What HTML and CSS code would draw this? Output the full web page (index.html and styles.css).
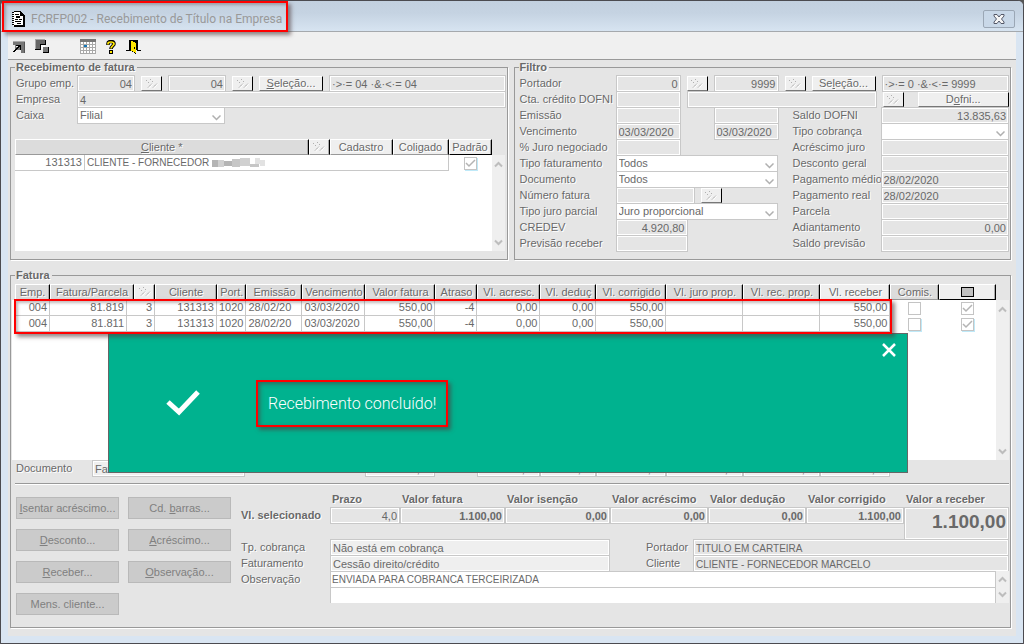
FILE: index.html
```html
<!DOCTYPE html>
<html lang="pt-BR">
<head>
<meta charset="utf-8">
<title>FCRFP002 - Recebimento de Título na Empresa</title>
<link rel="stylesheet" href="styles.css">
</head>
<body>
<svg class="defs" aria-hidden="true">
  <symbol id="pick" viewBox="0 0 14 10">
    <path d="M4 9.5l4-5M9 9.5l4-5" stroke="#fff"/>
    <path d="M3 8.500l4-4M8 8.500l4-4" stroke="#a8a8a8" stroke-dasharray="1.500 .5"/>
    <path d="M1 1h1v1h-1zM3 3h1v1h-1zM5 0h1v1h-1zM7 2h1v1h-1z" fill="#b0b0b0"/>
  </symbol>
  <symbol id="up" viewBox="0 0 9 7"><path d="M1 5.500L4.500 2L8 5.500" fill="none" stroke="#bdbdbd" stroke-width="2"/></symbol>
  <symbol id="down" viewBox="0 0 9 7"><path d="M1 1.500L4.500 5L8 1.500" fill="none" stroke="#bdbdbd" stroke-width="2"/></symbol>
</svg>
<div class="window">
  <header class="titlebar">
    <svg class="doc-icon" width="13" height="16" viewBox="0 0 13 16" shape-rendering="crispEdges"><path d="M1 1h8l3 3v11H1z" fill="#fff"/><path d="M0 1h2v1H0zM0 3h2v1H0zM0 5h2v1H0zM0 7h2v1H0zM0 9h2v1H0zM0 11h2v1H0zM0 13h2v1H0zM2 0h7v1H2zM9 1h1v1h1v1h1v1h1v11h-2V5H8V1zM2 14h11v2H2zM3 3h4v1H3zM4 5h4v2H4zM3 8h3v1H3zM7 8h3v1H7zM3 10h6v1H3zM5 12h4v1H5z" fill="#000"/></svg>
    <h1>FCRFP002 - Recebimento de Título na Empresa</h1>
    <button class="close" aria-label="Fechar"><svg width="12" height="10" viewBox="0 0 12 10"><path d="M1 .5h3l2 2.500 2-2.500h3v1.500L8.500 5 11 8v1.500H8L6 7 4 9.500H1V8l2.500-3L1 2z" fill="#f5f5f5" stroke="#545868"/></svg></button>
    <div class="mark mark-title"></div>
  </header>

  <nav class="toolbar">
    <button aria-label="Abrir"><svg width="12" height="12" viewBox="0 0 12 12" shape-rendering="crispEdges"><path d="M0 1h11v11H8V4H0z" fill="#777"/><path d="M2 3h7v6H2z" fill="#777"/><path d="M0 0h12v1H0z" fill="#aaa"/><path d="M11 1h1v11h-1z" fill="#555"/><path d="M3 4h5v5H7V6H6v1H5v1H4v1H3v1H2v1H0v-1h1V9h1V8h1V7h1V6h1V5H3z" fill="#000"/><path d="M3 5h2v1H3z" fill="#eee"/></svg></button>
    <button aria-label="Organizar"><svg width="15" height="15" viewBox="0 0 15 15" shape-rendering="crispEdges"><path d="M0 0h10v5H5v5H0z" fill="#666"/><path d="M0 0h10v1H0zM0 0h1v10H0z" fill="#aaa"/><path d="M6 6h4v2H8v2H6z" fill="#fff"/><path d="M8 8h6v6H8z" fill="#777"/><path d="M10 1h1v5h-1zM5 5h1v5H5zM0 10h6v1H0zM5 5h6v1H5zM13 8h1v6H8v-1h5z" fill="#000"/></svg></button>
    <button class="spaced" aria-label="Calendário"><svg width="16" height="15" viewBox="0 0 16 15" shape-rendering="crispEdges"><path d="M0 0h16v15H0z" fill="#a9a9a9"/><path d="M0 0h16v3H0z" fill="#777"/><path d="M1 3h2v2H1zM4 3h2v2H4zM7 3h2v2H7zM10 3h2v2h-2zM13 3h2v2h-2zM1 6h2v2H1zM7 6h2v2H7zM10 6h2v2h-2zM13 6h2v2h-2zM1 9h2v2H1zM4 9h2v2H4zM7 9h2v2H7zM10 9h2v2h-2zM13 9h2v2h-2zM1 12h2v2H1zM4 12h2v2H4zM7 12h2v2H7zM10 12h2v2h-2zM13 12h2v2h-2z" fill="#fff"/><path d="M4 6h3v2H4z" fill="#1677b8"/></svg></button>
    <button aria-label="Ajuda"><svg width="10" height="14" viewBox="0 0 10 14"><path d="M2 5V3.500C2 2 3 1.500 5 1.500S8 2.500 8 4 5 6.500 5 9" fill="none" stroke="#000" stroke-width="3.500"/><path d="M2 4.500V3.500C2 2.500 3 2 5 2S8 3 8 4 5 6.500 5 8.500" fill="none" stroke="#ffe600" stroke-width="1.700"/><path d="M3 10h4v4H3z" fill="#000"/><path d="M4 11h2v2H4z" fill="#ffe600"/></svg></button>
    <button aria-label="Sair"><svg width="15" height="14" viewBox="0 0 15 14" shape-rendering="crispEdges"><path d="M3 0h9v10h3v1h-4V1H4v10H0v-1h3z" fill="#000"/><path d="M4 1h7v9H10v4H9v-1H8v-1H6v-1H4z" fill="#000"/><path d="M5 1h2v1h2v1h1v10H9v-1H7v-1H5z" fill="#ffe600"/><path d="M8 7h1v2H8z" fill="#000"/></svg></button>
  </nav>

  <main>
    <div class="top">
      <fieldset class="group">
        <legend>Recebimento de fatura</legend>
        <div class="line narrow">
          <label for="grupo1">Grupo emp.</label>
          <input id="grupo1" class="num w58" value="04" readonly>
          <button class="btn pick" aria-label="Buscar grupo inicial"><svg><use href="#pick"/></svg></button>
          <input class="num w58" value="04" aria-label="Grupo final" readonly>
          <button class="btn pick" aria-label="Buscar grupo final"><svg><use href="#pick"/></svg></button>
          <button class="btn select-btn"><u>S</u>eleção...</button>
          <input class="grow" value="·&gt;·= 04 ·&amp;·&lt;·= 04" aria-label="Condição do grupo" readonly>
        </div>
        <div class="line narrow">
          <label for="empresa">Empresa</label>
          <input id="empresa" class="grow" value="4" readonly>
        </div>
        <div class="line narrow">
          <label for="caixa">Caixa</label>
          <select id="caixa" class="w148"><option>Filial</option></select>
        </div>
        <div class="list clients">
          <table>
            <colgroup><col class="c70"><col><col class="c21"><col class="c63"><col class="c56"><col class="c43"></colgroup>
            <thead><tr>
              <th colspan="2"><button class="gray"><u>C</u>liente *</button></th>
              <th><button aria-label="Buscar cliente"><svg><use href="#pick"/></svg></button></th>
              <th><button>Cadastro</button></th>
              <th><button>Coli<u>g</u>ado</button></th>
              <th><button class="last">Padrão</button></th>
            </tr></thead>
            <tbody><tr>
              <td class="r">131313</td>
              <td colspan="4" class="caps">CLIENTE - FORNECEDOR <svg class="masked" width="53" height="11" viewBox="0 0 53 11"><path d="M0 2h6v7H0zM12 3h8v5h-8z" fill="#b4b4b4"/><path d="M6 2h6v7H6zM28 0h10v8H28z" fill="#d0d0d0"/><path d="M20 1h8v8h-8zM38 6h9v3h-9z" fill="#c6c6c6"/><path d="M43 0h5v6h-5zM48 2h5v6h-5z" fill="#e2e2e2"/></svg></td>
              <td class="check"><input type="checkbox" class="lit" checked aria-label="Padrão"></td>
            </tr></tbody>
          </table>
          <div class="scroll"><svg><use href="#up"/></svg><svg><use href="#down"/></svg></div>
        </div>
      </fieldset>

      <fieldset class="group">
        <legend>Filtro</legend>
        <div class="line">
          <label for="portador1">Portador</label>
          <input id="portador1" class="num w65" value="0" readonly>
          <button class="btn pick" aria-label="Buscar portador inicial"><svg><use href="#pick"/></svg></button>
          <input class="num w65" value="9999" aria-label="Portador final" readonly>
          <button class="btn pick" aria-label="Buscar portador final"><svg><use href="#pick"/></svg></button>
          <button class="btn select-btn">Se<u>l</u>eção...</button>
          <input class="grow" value="·&gt;·= 0 ·&amp;·&lt;·= 9999" aria-label="Condição do portador" readonly>
        </div>
        <div class="line">
          <label for="cta">Cta. crédito DOFNI</label>
          <input id="cta" class="w65" readonly>
          <input class="w190" aria-label="Descrição da conta" readonly>
          <button class="btn pick" aria-label="Buscar conta"><svg><use href="#pick"/></svg></button>
          <button class="btn grow dofni">D<u>o</u>fni...</button>
        </div>
        <div class="line">
          <div class="half"><label for="emissao">Emissão</label><input id="emissao" class="w65" readonly><input class="w65 until" aria-label="Emissão final" readonly></div>
          <label class="second" for="saldo">Saldo DOFNI</label><input id="saldo" class="grow num" value="13.835,63" readonly>
        </div>
        <div class="line">
          <div class="half"><label for="venc">Vencimento</label><input id="venc" class="w65" value="03/03/2020" readonly><input class="w65 until" value="03/03/2020" aria-label="Vencimento final" readonly></div>
          <label class="second" for="tipocob">Tipo cobrança</label><select id="tipocob" class="grow"><option></option></select>
        </div>
        <div class="line">
          <div class="half"><label for="juro">% Juro negociado</label><input id="juro" class="w65" readonly></div>
          <label class="second" for="acr">Acréscimo juro</label><input id="acr" class="grow" readonly>
        </div>
        <div class="line">
          <div class="half"><label for="tipofat">Tipo faturamento</label><select id="tipofat" class="w162"><option>Todos</option></select></div>
          <label class="second" for="desc">Desconto geral</label><input id="desc" class="grow" readonly>
        </div>
        <div class="line">
          <div class="half"><label for="doc">Documento</label><select id="doc" class="w162"><option>Todos</option></select></div>
          <label class="second" for="pagm">Pagamento médio</label><input id="pagm" class="grow" value="28/02/2020" readonly>
        </div>
        <div class="line">
          <div class="half"><label for="numfat">Número fatura</label><input id="numfat" class="w79" readonly><button class="btn pick after" aria-label="Buscar fatura"><svg><use href="#pick"/></svg></button></div>
          <label class="second" for="pagr">Pagamento real</label><input id="pagr" class="grow" value="28/02/2020" readonly>
        </div>
        <div class="line">
          <div class="half"><label for="tipojuro">Tipo juro parcial</label><select id="tipojuro" class="w162"><option>Juro proporcional</option></select></div>
          <label class="second" for="parc">Parcela</label><input id="parc" class="grow" readonly>
        </div>
        <div class="line">
          <div class="half"><label for="credev">CREDEV</label><input id="credev" class="w72 num" value="4.920,80" readonly></div>
          <label class="second" for="adi">Adiantamento</label><input id="adi" class="grow num" value="0,00" readonly>
        </div>
        <div class="line">
          <div class="half"><label for="prev">Previsão receber</label><input id="prev" class="w72" readonly></div>
          <label class="second" for="saldop">Saldo previsão</label><input id="saldop" class="grow" readonly>
        </div>
      </fieldset>
    </div>

    <fieldset class="group invoice">
      <legend>Fatura</legend>
      <div class="list invoices">
        <table>
          <colgroup><col class="c35"><col class="c77"><col class="c7"><col class="c21"><col class="c62"><col class="c28"><col class="c56"><col class="c63"><col class="c70"><col class="c42"><col class="c63"><col class="c56"><col class="c70"><col class="c77"><col class="c77"><col class="c70"><col class="c49"><col></colgroup>
          <thead><tr>
            <th><button class="gray">Emp.</button></th>
            <th colspan="2"><button class="gray">Fatura/Parcela</button></th>
            <th><button aria-label="Buscar fatura"><svg><use href="#pick"/></svg></button></th>
            <th><button class="gray">Cliente</button></th>
            <th><button class="gray">Port.</button></th>
            <th><button class="gray">Emissão</button></th>
            <th><button class="gray">Vencimento</button></th>
            <th><button class="gray">Valor fatura</button></th>
            <th><button class="gray">Atraso</button></th>
            <th><button class="gray">Vl. acresc.</button></th>
            <th><button class="gray">Vl. deduç</button></th>
            <th><button class="gray">Vl. corrigido</button></th>
            <th><button class="gray">Vl. juro prop.</button></th>
            <th><button class="gray">Vl. rec. prop.</button></th>
            <th><button>Vl. receber</button></th>
            <th><button class="gray">Comis.</button></th>
            <th><button class="last" aria-label="Marcar todas"><span class="square"></span></button></th>
          </tr></thead>
          <tbody>
            <tr><td class="r">004</td><td class="r">81.819</td><td class="r" colspan="2">3</td><td class="r">131313</td><td class="r">1020</td><td>28/02/20</td><td>03/03/2020</td><td class="r">550,00</td><td class="r">-4</td><td class="r">0,00</td><td class="r">0,00</td><td class="r">550,00</td><td></td><td></td><td class="r">550,00</td><td class="check"><input type="checkbox" aria-label="Comissão 81.819"></td><td class="check"><input type="checkbox" checked aria-label="Selecionar 81.819"></td></tr>
            <tr><td class="r">004</td><td class="r">81.811</td><td class="r" colspan="2">3</td><td class="r">131313</td><td class="r">1020</td><td>28/02/20</td><td>03/03/2020</td><td class="r">550,00</td><td class="r">-4</td><td class="r">0,00</td><td class="r">0,00</td><td class="r">550,00</td><td></td><td></td><td class="r">550,00</td><td class="check"><input type="checkbox" class="lit" aria-label="Comissão 81.811"></td><td class="check"><input type="checkbox" class="lit" checked aria-label="Selecionar 81.811"></td></tr>
          </tbody>
        </table>
        <div class="scroll"><svg><use href="#up"/></svg><svg><use href="#down"/></svg></div>
      </div>
      <div class="totals">
        <label for="docrow">Documento</label>
        <input id="docrow" class="doc light" value="Fatura" readonly>
        <input class="num light t1" value="1.100,00" aria-label="Total valor fatura" readonly>
        <input class="num light t2" value="0,00" aria-label="Total acréscimo" readonly>
        <input class="num light t3" value="0,00" aria-label="Total dedução" readonly>
        <input class="num light t4" value="1.100,00" aria-label="Total corrigido" readonly>
        <input class="num light t5" value="0,00" aria-label="Total juro proporcional" readonly>
        <input class="num light t6" value="0,00" aria-label="Total recebido proporcional" readonly>
        <input class="num light t7" value="1.100,00" aria-label="Total a receber" readonly>
      </div>
      <hr>
      <div class="bottom">
        <div class="actions">
          <button><u>I</u>sentar acréscimo...</button><button>Cd. <u>b</u>arras...</button>
          <button><u>D</u>esconto...</button><button><u>A</u>créscimo...</button>
          <button><u>R</u>eceber...</button><button><u>O</u>bservação...</button>
          <button>Mens. cliente...</button>
        </div>
        <div class="detail">
          <div class="sums">
            <strong class="sel">Vl. selecionado</strong>
            <div><label for="s1">Prazo</label><input id="s1" value="4,0" class="num" readonly></div>
            <div><label for="s2">Valor fatura</label><input id="s2" value="1.100,00" class="num bold" readonly></div>
            <div><label for="s3">Valor isenção</label><input id="s3" value="0,00" class="num bold" readonly></div>
            <div><label for="s4">Valor acréscimo</label><input id="s4" value="0,00" class="num bold" readonly></div>
            <div><label for="s5">Valor dedução</label><input id="s5" value="0,00" class="num bold" readonly></div>
            <div><label for="s6">Valor corrigido</label><input id="s6" value="1.100,00" class="num bold" readonly></div>
            <div><label for="s7">Valor a receber</label><input id="s7" value="1.100,00" class="num big" readonly></div>
          </div>
          <div class="info">
            <label for="tp">Tp. cobrança</label><input id="tp" class="light" value="Não está em cobrança" readonly>
            <label class="indent" for="port">Portador</label><input id="port" class="caps" value="TITULO EM CARTEIRA" readonly>
            <label for="fat">Faturamento</label><input id="fat" class="light" value="Cessão direito/crédito" readonly>
            <label class="indent" for="cli">Cliente</label><input id="cli" class="caps" value="CLIENTE - FORNECEDOR MARCELO" readonly>
          </div>
          <div class="note">
            <label for="obs">Observação</label>
            <textarea id="obs" class="caps" readonly>ENVIADA PARA COBRANCA TERCEIRIZADA</textarea>
            <div class="scroll"><svg><use href="#up"/></svg><svg><use href="#down"/></svg></div>
          </div>
        </div>
      </div>

      <div class="toast" role="status">
        <svg class="tick" width="34" height="26" viewBox="0 0 34 26"><path d="M2 12l11 10L32 2" fill="none" stroke="#fff" stroke-width="5"/></svg>
        <p>Recebimento concluído!</p>
        <button aria-label="Fechar mensagem"><svg width="14" height="14" viewBox="0 0 14 14"><path d="M1 1l12 12M13 1L1 13" stroke="#fff" stroke-width="2.500"/></svg></button>
      </div>
      <div class="mark mark-rows"></div>
    </fieldset>
  </main>
</div>
</body>
</html>
```
FILE: styles.css
```css
* { box-sizing: border-box; }
body { margin: 0; background: #555; color: #696969; font: 11px/16px "Liberation Sans", Arial, sans-serif; }
button, input, select, textarea { font: inherit; color: inherit; margin: 0; border-radius: 0; outline: none; }
button { padding: 0; text-align: center; white-space: nowrap; }
.defs { position: absolute; width: 0; height: 0; }

.window {
  min-height: 100vh; display: flex; flex-direction: column; padding: 0 7px 7px;
  border: 1px solid #4b4b50; border-radius: 6px 6px 0 0; background: #d9e5f2;
}
.titlebar {
  position: relative; display: flex; align-items: center; height: 31px; margin: 0 -7px; padding: 6px 8px 0 11px;
  background: linear-gradient(#c2d0df, #c5d3e2 40%, #d7e4f1); border-radius: 5px 5px 0 0; border-bottom: 1px solid #a5a9ad;
}
.titlebar h1 { flex: 1; margin: 0 0 0 6px; font: 12px/16px Roboto, sans-serif; color: #999; }
.close { display: flex; align-items: center; justify-content: center; width: 32px; height: 18px; background: #c9d8e8; border: 1px solid #9ba7b5; border-radius: 2px; }

.mark { position: absolute; border: 2px solid #f00; box-shadow: 3px 3px 4px rgba(80, 60, 60, .6), inset 2px 2px 3px rgba(80, 60, 60, .35); pointer-events: none; }
.mark-title { left: 1px; top: 0; width: 286px; height: 31px; }

.toolbar { display: flex; align-items: center; gap: 10px; height: 28px; padding: 2px 0 0 5px; background: #f0f0f0; border-bottom: 1px solid #999; }
.toolbar button { display: flex; padding: 0; border: 0; background: none; }
.toolbar .spaced { margin-left: 20px; }

main { flex: 1; display: flex; flex-direction: column; gap: 9px; padding: 1px 5px 8px 2px; background: #e5e5e5; }
.top { display: flex; gap: 6px; }
.top > .group { flex: 1; }
.group { position: relative; min-width: 0; margin: 0; padding: 1px 1px 8px 4px; border: 1px solid #999; box-shadow: 1px 1px 0 #fff; }
legend { margin: 0; padding: 0 2px 0 1px; font-weight: bold; line-height: 13px; background: #e5e5e5; text-shadow: 1px 1px 0 #fff; }
label, .sel { flex: none; padding-left: 1px; text-shadow: 1px 1px 0 #fff; white-space: nowrap; }

.line { display: flex; gap: 6px; height: 16px; align-items: flex-start; }
.line label { width: 91px; }
.line.narrow label { width: 56px; }
.line .half { display: flex; flex: none; width: 267px; }
.line .half label { width: 97px; }
.line .second { width: 83px; }
.line .until { margin-left: 33px; }
.line .after { margin-left: 6px; }

input:not([type]) { flex: none; min-width: 0; height: 17px; padding: 1px 2px 0; border: 1px solid #c8c8c8; background: #e5e5e5; box-shadow: inset 0 0 0 1px #fff; line-height: 14px; }
input.light:not([type]) { background: #efefef; }
input.num { text-align: right; }
select {
  flex: none; height: 17px; padding: 0 2px 1px; border: 1px solid #c8c8c8; appearance: none; line-height: 14px;
  background: #fff url("data:image/svg+xml,%3Csvg xmlns='http://www.w3.org/2000/svg' width='9' height='6'%3E%3Cpath d='M.5 .5L4.500 4.500L8.500 .5' fill='none' stroke='%23b0b0b0' stroke-width='1.500'/%3E%3C/svg%3E") no-repeat right 3px top 7px;
}
input.grow:not([type]), select.grow, .btn.grow { flex: 1; min-width: 0; }
.w58 { width: 58px; }
.w65 { width: 65px; }
.w72 { width: 72px; }
.w79 { width: 79px; }
.w148 { width: 148px; }
.w162 { width: 162px; }
.w190 { width: 190px; }
.caps, input.caps { font-size: 10px; }

.btn { flex: none; height: 15px; margin-top: 1px; border: 1px solid #fff; border-right-color: #000; border-bottom-color: #777; background: #efefef; line-height: 13px; text-shadow: 1px 1px 0 #fff; }
.pick { width: 21px; }
.btn svg, th svg { display: block; width: 14px; height: 10px; margin: 0 auto; }
.select-btn { width: 64px; }
.btn.dofni { margin-left: 8px; }

.list { display: flex; align-items: stretch; }
.clients { height: 112px; margin-top: 16px; margin-right: 1px; background: linear-gradient(#e5e5e5 16px, #fff 16px); }
.invoices { height: 176px; margin: 1px 0 0 -3px; padding-left: 3px; background: linear-gradient(#e5e5e5 16px, #fff 16px); }
table { flex: 1; min-width: 0; height: max-content; border-collapse: separate; border-spacing: 0; table-layout: fixed; }
th, td { padding: 0; font-weight: normal; }
th { height: 16px; }
th button { display: block; width: 100%; height: 16px; border: 1px solid #fff; border-right-color: #000; border-bottom-color: #999; background: #efefef; line-height: 14px; overflow: hidden; text-shadow: 1px 1px 0 #fff; box-shadow: inset -1px 0 0 #aaa; }
th button.gray { background: #dcdcdc; }
th button.last { border-bottom-color: #000; }
td { height: 16px; padding: 0 2px; border-right: 1px solid #c8c8c8; border-bottom: 1px solid #c8c8c8; line-height: 15px; white-space: nowrap; overflow: hidden; }
.r { text-align: right; }
td.check { border: 0; padding: 0; text-align: center; }
td.check input { display: block; appearance: none; width: 13px; height: 13px; margin: 0 auto; border: 1px solid #c4c4c4; background: #fff center no-repeat; }
td.check .lit { box-shadow: 1px 1px 0 #bfe9f8; }
td.check input:checked { background-image: url("data:image/svg+xml,%3Csvg xmlns='http://www.w3.org/2000/svg' width='11' height='11'%3E%3Cpath d='M1 5l3 3 6-6' fill='none' stroke='%23b4b4b4' stroke-width='1.500'/%3E%3C/svg%3E"); }
.masked { vertical-align: middle; }
.square { display: block; width: 13px; height: 10px; margin: 0 auto; border: 1px solid #000; background: #c0c0c0; }
.scroll { display: flex; flex: none; flex-direction: column; justify-content: space-between; align-items: center; width: 13px; margin-top: 16px; padding: 6px 0 5px; background: #efefef; }
.scroll svg { width: 9px; height: 7px; }

.c7 { width: 7px; }
.c21 { width: 21px; }
.c28 { width: 28px; }
.c35 { width: 35px; }
.c42 { width: 42px; }
.c43 { width: 43px; }
.c49 { width: 49px; }
.c56 { width: 56px; }
.c62 { width: 62px; }
.c63 { width: 63px; }
.c70 { width: 70px; }
.c77 { width: 77px; }

.invoice { flex: 1; padding-bottom: 8px; }
.totals { display: flex; height: 17px; }
.totals label { width: 77px; }
.totals .doc { width: 153px; margin-right: 120px; }
.totals .t1 { width: 70px; margin-right: 42px; }
.totals .t2 { width: 63px; }
.totals .t3 { width: 56px; }
.totals .t4, .totals .t7 { width: 70px; }
.totals .t5, .totals .t6 { width: 77px; }
hr { height: 2px; margin: 6px 0 0; border: 0; background: linear-gradient(#999 1px, #fff 1px); }

.bottom { display: flex; gap: 9px; padding-top: 7px; }
.actions { display: grid; align-content: start; grid-template-columns: 103px 103px; grid-auto-rows: 22px; gap: 10px 9px; padding: 5px 0 0 1px; }
.actions button { border: 1px solid #b9b9b9; background: #cbcbcb; color: #808080; }
.detail { flex: 1; min-width: 0; }
.sums { display: grid; grid-template-columns: 90px 70px 105px 105px 98px 98px 98px minmax(0, 1fr); height: 47px; }
.sums div { display: flex; flex-direction: column; }
.sums label, .sel { font-weight: bold; line-height: 15px; }
.sums label { height: 15px; padding-left: 2px; }
.sel { padding-top: 16px; }
input.bold { font-weight: bold; }
.sums input { width: 100%; }
.sums input.big { height: 33px; padding-bottom: 4px; font-size: 19px; font-weight: bold; line-height: 24px; }
.info { display: grid; grid-template-columns: 90px 280px 83px 1fr; grid-auto-rows: 16px; }
.info .indent { padding-left: 36px; }
.note { display: flex; height: 32px; }
.note label { width: 90px; }
.note textarea { flex: 1; min-width: 0; padding: 0 1px; border: 1px solid #c8c8c8; border-width: 1px 1px 0; background: linear-gradient(#fff 15px, #c8c8c8 15px, #c8c8c8 16px, #fff 16px); resize: none; overflow: hidden; line-height: 16px; }
.note .scroll { margin-top: 0; padding: 5px 0; }

.toast { position: absolute; left: 97px; top: 51px; display: flex; align-items: center; width: 800px; height: 140px; padding-left: 57px; border: 1px solid #666; background: #00b28f; color: #fff; }
.toast p { margin: 0 0 0 56px; padding: 14px 10px; border: 2px solid #f00; box-shadow: 3px 3px 4px rgba(80, 60, 60, .6), inset 2px 2px 4px rgba(80, 60, 60, .6); font: 300 16px/15px Roboto, sans-serif; }
.toast button { position: absolute; top: 9px; right: 11px; display: flex; border: 0; background: none; }
.mark-rows { left: 3px; top: 17px; width: 878px; height: 35px; }
```
